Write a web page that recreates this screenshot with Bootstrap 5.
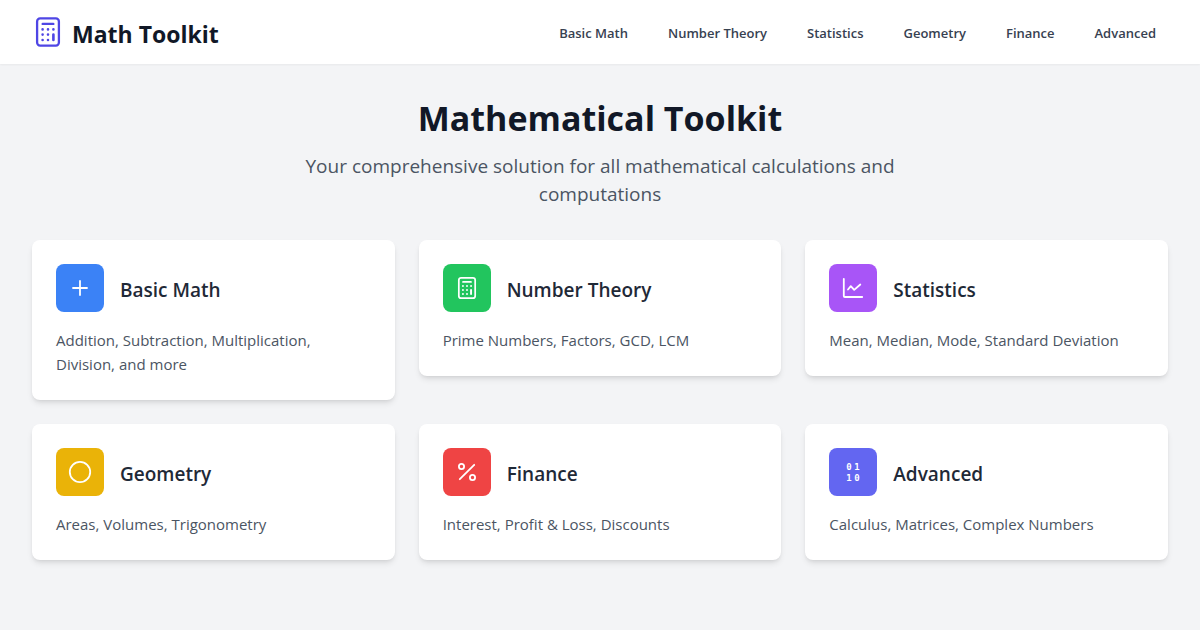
<!DOCTYPE html>
<html lang="en">
<head>
<meta charset="utf-8">
<meta name="viewport" content="width=device-width, initial-scale=1">
<title>Math Toolkit</title>
<link href="https://cdn.jsdelivr.net/npm/bootstrap@5.3.0/dist/css/bootstrap.min.css" rel="stylesheet">
<style>
  body { background: #f3f4f6; color: #111827; font-family: "Segoe UI", "Open Sans", "Noto Sans", sans-serif; }
  a { color: inherit; text-decoration: none; }
  .page-width { max-width: 1280px; padding-left: 32px; padding-right: 32px; }
  .site-nav { min-height: 64px; box-shadow: 0 1px 2px rgba(0, 0, 0, .05); }
  .site-nav .navbar-brand { font-size: 23px; line-height: 32px; font-weight: 700; color: #111827; }
  .site-nav .brand-icon { color: #4f46e5; }
  .site-nav .navbar-nav .nav-link { font-size: 13px; line-height: 20px; font-weight: 600; color: #374151; padding: 10px 12px 8px; }
  .hero-title { font-size: 34px; line-height: 44px; font-weight: 700; }
  .hero-text { font-size: 19px; line-height: 28px; color: #4b5563; max-width: 672px; }
  .tool-card { border: 0; border-radius: 8px; color: #4b5563; box-shadow: 0 4px 6px -1px rgba(0, 0, 0, .1), 0 2px 4px -2px rgba(0, 0, 0, .1); }
  .tool-card h2 { font-size: 19px; line-height: 28px; font-weight: 600; color: #1f2937; }
  .tool-card p { font-size: 15px; line-height: 24px; }
  .tile { width: 48px; height: 48px; border-radius: 8px; color: #fff; }
  .line-icon { fill: none; stroke: currentColor; stroke-width: 1.8; stroke-linecap: round; stroke-linejoin: round; }
  .binary { font: 700 9px "DejaVu Sans Mono", monospace; fill: currentColor; }
  .blue { background: #3b82f6; } .green { background: #22c55e; } .purple { background: #a855f7; }
  .yellow { background: #eab308; } .red { background: #ef4444; } .indigo { background: #6366f1; }
</style>
</head>
<body>
<svg class="d-none" aria-hidden="true">
  <symbol id="calculator" viewBox="0 0 32 32">
    <rect x="5.1" y="2.4" width="21.8" height="27.2" rx="3" stroke-width="2.3"/>
    <path d="M10.7 7.9h10.6" stroke-width="2.4"/>
    <path d="M10.6 13.4h.01M16 13.4h.01M21.4 13.4h.01M10.6 18.6h.01M16 18.6h.01M10.6 24h.01M16 24h.01M21.4 18.6V24" stroke-width="2.6"/>
  </symbol>
</svg>
<nav class="navbar navbar-expand site-nav bg-white py-0">
  <div class="container-fluid page-width">
    <a class="navbar-brand d-flex align-items-center gap-2 py-0 m-0" href="#">
      <svg class="line-icon brand-icon" width="32" height="32" aria-hidden="true"><use href="#calculator"/></svg>
      <span class="pt-1">Math Toolkit</span>
    </a>
    <div class="navbar-nav gap-3">
      <a class="nav-link" href="#basic">Basic Math</a>
      <a class="nav-link" href="#number">Number Theory</a>
      <a class="nav-link" href="#statistics">Statistics</a>
      <a class="nav-link" href="#geometry">Geometry</a>
      <a class="nav-link" href="#finance">Finance</a>
      <a class="nav-link" href="#advanced">Advanced</a>
    </div>
  </div>
</nav>
<main class="container-fluid page-width py-4 mt-2">
  <header class="text-center mb-4 pb-2">
    <h1 class="hero-title mb-2 pb-1">Mathematical Toolkit</h1>
    <p class="hero-text mx-auto mb-0">Your comprehensive solution for all mathematical calculations and computations</p>
  </header>
  <div class="row g-4 align-items-start">
    <div class="col-4"><a class="card tool-card p-4" id="basic" href="#basic">
      <div class="d-flex align-items-center gap-3 mb-3">
        <span class="tile blue d-flex align-items-center justify-content-center"><svg class="line-icon" width="24" height="24" viewBox="0 0 24 24" aria-hidden="true"><path d="M12 5v14M5 12h14"/></svg></span>
        <h2 class="mb-0 pt-1">Basic Math</h2>
      </div>
      <p class="mb-0">Addition, Subtraction, Multiplication, Division, and more</p>
    </a></div>
    <div class="col-4"><a class="card tool-card p-4" id="number" href="#number">
      <div class="d-flex align-items-center gap-3 mb-3">
        <span class="tile green d-flex align-items-center justify-content-center"><svg class="line-icon" width="24" height="24" aria-hidden="true"><use href="#calculator"/></svg></span>
        <h2 class="mb-0 pt-1">Number Theory</h2>
      </div>
      <p class="mb-0">Prime Numbers, Factors, GCD, LCM</p>
    </a></div>
    <div class="col-4"><a class="card tool-card p-4" id="statistics" href="#statistics">
      <div class="d-flex align-items-center gap-3 mb-3">
        <span class="tile purple d-flex align-items-center justify-content-center"><svg class="line-icon" width="24" height="24" viewBox="0 0 24 24" aria-hidden="true"><path d="M2.8 2.8V20a1 1 0 0 0 1 1h17.4M7 13.5l2.8-3.4 3.4 3.8 6.1-5.4"/></svg></span>
        <h2 class="mb-0 pt-1">Statistics</h2>
      </div>
      <p class="mb-0">Mean, Median, Mode, Standard Deviation</p>
    </a></div>
    <div class="col-4"><a class="card tool-card p-4" id="geometry" href="#geometry">
      <div class="d-flex align-items-center gap-3 mb-3">
        <span class="tile yellow d-flex align-items-center justify-content-center"><svg class="line-icon" width="24" height="24" viewBox="0 0 24 24" aria-hidden="true"><circle cx="12" cy="12" r="10.2"/></svg></span>
        <h2 class="mb-0 pt-1">Geometry</h2>
      </div>
      <p class="mb-0">Areas, Volumes, Trigonometry</p>
    </a></div>
    <div class="col-4"><a class="card tool-card p-4" id="finance" href="#finance">
      <div class="d-flex align-items-center gap-3 mb-3">
        <span class="tile red d-flex align-items-center justify-content-center"><svg class="line-icon" width="24" height="24" viewBox="0 0 24 24" aria-hidden="true"><circle cx="6.5" cy="6.5" r="2.6"/><circle cx="17.5" cy="17.5" r="2.6"/><path d="M19.2 4.8L4.8 19.2"/></svg></span>
        <h2 class="mb-0 pt-1">Finance</h2>
      </div>
      <p class="mb-0">Interest, Profit &amp; Loss, Discounts</p>
    </a></div>
    <div class="col-4"><a class="card tool-card p-4" id="advanced" href="#advanced">
      <div class="d-flex align-items-center gap-3 mb-3">
        <span class="tile indigo d-flex align-items-center justify-content-center"><svg class="binary" width="24" height="24" viewBox="0 0 24 24" text-anchor="middle" aria-hidden="true"><text x="8" y="10">0</text><text x="16" y="10">1</text><text x="8" y="21">1</text><text x="16" y="21">0</text></svg></span>
        <h2 class="mb-0 pt-1">Advanced</h2>
      </div>
      <p class="mb-0">Calculus, Matrices, Complex Numbers</p>
    </a></div>
  </div>
</main>
<script src="https://cdn.jsdelivr.net/npm/bootstrap@5.3.0/dist/js/bootstrap.bundle.min.js"></script>
</body>
</html>
